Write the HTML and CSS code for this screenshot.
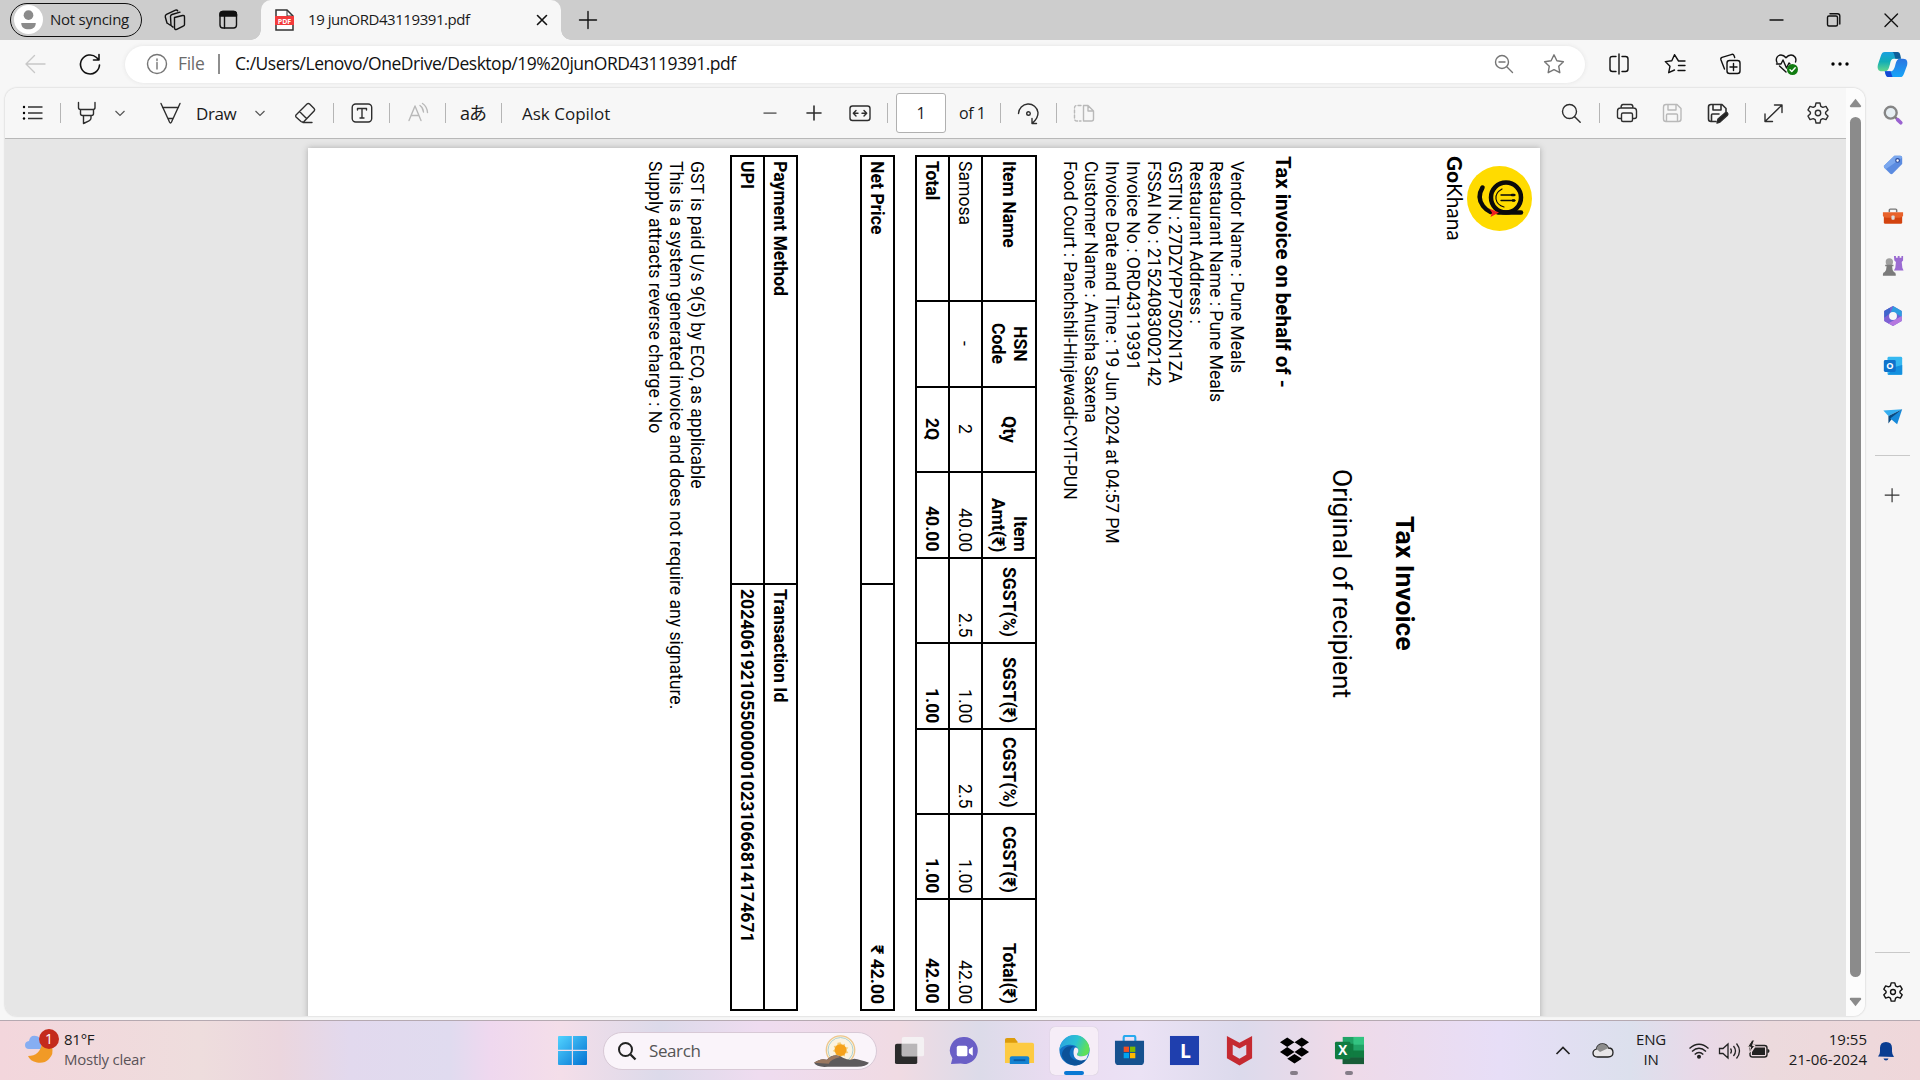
FILE: index.html
```html
<!DOCTYPE html>
<html lang="en">
<head>
<meta charset="utf-8">
<title>19 junORD43119391.pdf</title>
<link rel="stylesheet" href="styles.css">
</head>
<body>
<div class="browser">
  <header class="tabstrip">
    <div class="profile"><svg class="avatar" viewBox="0 0 30 30"><circle cx="15" cy="15" r="15" fill="#fff"/><circle cx="15" cy="10.500" r="5" fill="#8b8b8b"/><path d="M7.500 18.500h15c0 4.500-3 6.500-7.500 6.500s-7.500-2-7.500-6.500z" fill="#8b8b8b"/></svg><span>Not syncing</span></div>
    <svg class="ico dark" viewBox="0 0 24 24"><path d="M11.500 9.500l8-2q2-.4 2 1.500v7.500q0 1.300-1.300 1.600l-6.500 3.300q-2 .6-2.200-1.200zM8 17.500l-.5-9q0-1.500 1.500-2l8-2.300M4 15l-1.700-6q-.3-2 1.200-2.700l9-4.200q1.500-.5 2.200.8M8 17.500l2 1.600M4 15l3 2"/></svg>
    <svg class="ico dark" viewBox="0 0 24 24"><rect x="4" y="3.500" width="16.500" height="16.500" rx="3"/><path d="M8.500 8v12"/><path d="M4 8V6.500q0-3 3-3h10.500q3 0 3 3V8z" fill="#111"/></svg>
    <div class="tab">
      <svg class="ico" viewBox="0 0 24 24"><path d="M4 2h11l6 6v14H4z" fill="#fff" stroke="#333" stroke-width="1.500"/><path d="M15 2v6h6" stroke="#333" fill="none"/><rect x="3" y="8" width="19" height="9" fill="#f33b3b"/><text x="12.500" y="15.500" class="pdftext">PDF</text></svg>
      <span class="tabtitle">19 junORD43119391.pdf</span>
      <svg class="ico dark" viewBox="0 0 24 24"><path d="M7.500 7.500l9 9M16.500 7.500l-9 9" stroke-width="1.600"/></svg>
    </div>
    <svg class="ico dark" viewBox="0 0 24 24"><path d="M12 3.500v17M3.500 12h17"/></svg>
    <svg class="ico dark" viewBox="0 0 24 24"><path d="M6 12h13"/></svg>
    <svg class="ico dark" viewBox="0 0 24 24"><rect x="6.500" y="8" width="10" height="10" rx="1.500"/><path d="M9 5.800h7.500q2.300 0 2.300 2.300V16"/></svg>
    <svg class="ico dark" viewBox="0 0 24 24"><path d="M6 6l12.500 12.500M18.500 6L6 18.500"/></svg>
  </header>

  <div class="navbar">
    <svg class="ico pale" viewBox="0 0 24 24"><path d="M22 12H3M11.500 3.500L3 12l8.500 8.500"/></svg>
    <svg class="ico dark" viewBox="0 0 24 24"><path d="M21.500 13A9.500 9.500 0 1 1 18.500 5.500L21 8M21 2.500V8h-5.500" stroke-width="1.600"/></svg>
    <div class="address">
      <svg class="ico gray" viewBox="0 0 24 24"><circle cx="12" cy="12" r="9.500"/><path d="M12 10.500v6.500M12 7v1.600"/></svg>
      <span class="scheme">File</span>
      <i class="urlsep"></i>
      <span class="url">C:/Users/Lenovo/OneDrive/Desktop/19%20junORD43119391.pdf</span>
      <svg class="ico gray" viewBox="0 0 24 24"><circle cx="10" cy="10" r="6.500"/><path d="M15 15l5.500 5.500M7 10h6"/></svg>
      <svg class="ico gray" viewBox="0 0 24 24"><path d="M12 2.800l2.900 6 6.500.9-4.700 4.500 1.100 6.500-5.800-3.100-5.800 3.100 1.100-6.500L2.600 9.700l6.500-.9z"/></svg>
    </div>
    <svg class="ico dark" viewBox="0 0 24 24"><path d="M12 2v20M9 4.500H5.500q-2.500 0-2.500 2.500v10q0 2.500 2.500 2.500H9M15 4.500h3.500q2.500 0 2.500 2.500v10q0 2.500-2.500 2.500H15"/></svg>
    <svg class="ico dark" viewBox="0 0 24 24"><path d="M22 9h-6.500L11.500 2.700l-2.700 6-6.500.9L7 14.200l-1.300 6.500L11.500 18M15.500 13.500H22M15 18.500h7"/></svg>
    <svg class="ico dark" viewBox="0 0 24 24"><rect x="9" y="8.500" width="13" height="13" rx="2.500"/><path d="M15.500 11.500v7M12 15h7M6.500 17L3 8q-.7-2 1-2.700L14 2.300q1.500-.3 2.200 1.700l.5 1.500"/></svg>
    <svg class="ico dark" viewBox="0 0 24 24"><path d="M3 10.500C1 6 4 3 7 3c2.500 0 4 1.500 5 2.800C13 4.500 14.500 3 17 3c3 0 6 3 4.500 7M5.500 14l6.500 6M2.500 12H7l2-4 3.500 8 2.500-5 1 1"/><circle cx="18.500" cy="17.500" r="5.500" fill="#107c10" stroke="none"/><path d="M16 17.700l1.800 1.800 3.400-3.700" stroke="#fff"/></svg>
    <svg class="ico" viewBox="0 0 24 24"><circle cx="5" cy="12" r="1.700"/><circle cx="12" cy="12" r="1.700"/><circle cx="19" cy="12" r="1.700"/></svg>
    <svg class="copilot" viewBox="0 0 32 32">
      <defs><linearGradient id="cpa" x1="0" y1="0" x2="0" y2="1"><stop offset="0" stop-color="#1aa0e0"/><stop offset=".5" stop-color="#12adb6"/><stop offset="1" stop-color="#63d68c"/></linearGradient><linearGradient id="cpb" x1="0" y1="1" x2="0" y2="0"><stop offset="0" stop-color="#18a5f8"/><stop offset="1" stop-color="#2c75e0"/></linearGradient></defs>
      <path d="M8 3h12c3 0 3 3 4 7h-7c-3 0-3 4-4 7-1 4-2 6-5 6H5c-4 0-5-3-4-7L4 7c1-3 2-4 4-4z" fill="url(#cpa)"/>
      <path d="M16 3h5c3 0 3 3 4 7h-6c-1-3-1-6-3-7z" fill="#0d5e99"/>
      <path d="M24 29H12c-3 0-3-3-4-6h6c3 0 4-3 5-7 1-4 2-6 5-6h3c4 0 5 3 4 7l-3 8c-1 3-2 4-4 4z" fill="url(#cpb)"/>
      <path d="M8 23h6l2 6h-4c-3 0-3-3-4-6z" fill="#1548d4"/>
    </svg>
  </div>

  <div class="body">
    <main class="viewer">
      <div class="content">
        <div class="pdfbar">
          <svg class="ico" viewBox="0 0 24 24"><path d="M8 6h14.500M8 12h14.500M8 17.500h14.500" fill="none" stroke="#333" stroke-width="1.500"/><circle cx="4" cy="6" r="1.200"/><circle cx="4" cy="12" r="1.200"/><circle cx="4" cy="17.500" r="1.200"/></svg>
          <i class="sep"></i>
          <svg class="ico tool" viewBox="0 0 24 24"><path d="M4.500 1.500V6.500q0 2 2 2H19q2 0 2-2V1.500M6.500 8.500v4q0 2 2 2h9q2 0 2-2v-4M9.500 14.500v8l5.500-2.700q2-1 2-2.500v-2.800"/></svg>
          <svg class="chev" viewBox="0 0 16 16"><path d="M3.500 6L8 10.500 12.500 6"/></svg>
          <svg class="ico tool" viewBox="0 0 24 24"><path d="M3 2.500L11.500 21q1 2 2 0L22 2.500M4.500 6.500h16M10.500 17.500h4"/></svg>
          <span class="draw">Draw</span>
          <svg class="chev" viewBox="0 0 16 16"><path d="M3.500 6L8 10.500 12.500 6"/></svg>
          <svg class="ico tool" viewBox="0 0 24 24"><path d="M3 14L14 3q1.300-1.200 2.600 0l4.500 4.500q1.200 1.300 0 2.600L11 20.500q-1.500 1-3 0L3 16q-.8-1 0-2zM6.500 10.500l7 7M10 21.500h9"/></svg>
          <i class="sep"></i>
          <svg class="ico tool" viewBox="0 0 24 24"><rect x="2.200" y="3" width="19.500" height="18" rx="3.500"/><path d="M7.500 9V7.500h9V9M12 7.500v9.500M10 17h4"/></svg>
          <i class="sep"></i>
          <svg class="ico faint" viewBox="0 0 24 24"><path d="M3 19.500L9 5l6 14.500M5.200 14.500h7.600M14 4.500q3 2 3.500 6.500M16.500 2.500q4.500 3 5 9"/></svg>
          <i class="sep"></i>
          <span class="translate">aあ</span>
          <i class="sep"></i>
          <span class="ask">Ask Copilot</span>
          <svg class="ico" viewBox="0 0 24 24"><path d="M5.500 11.200h13v1.800h-13z" fill="#777"/></svg>
          <svg class="ico tool" viewBox="0 0 24 24"><path d="M12 5v14M5 12h14" stroke-width="1.600"/></svg>
          <svg class="ico tool" viewBox="0 0 24 24"><rect x="2" y="5" width="20" height="14.500" rx="2.500"/><path d="M10 12.200H5.500M8 9.500l-2.700 2.700L8 15M14 12.200h4.500M16 9.500l2.700 2.700L16 15"/></svg>
          <i class="sep"></i>
          <span class="pagebox">1</span>
          <span class="ofn">of 1</span>
          <i class="sep"></i>
          <svg class="ico tool" viewBox="0 0 24 24"><path d="M1.500 12.500A9.800 9.800 0 0 1 21 11.500q.3 5.500-5.500 10.500M15 17.500V22.500h4.500"/><circle cx="11.500" cy="12.500" r="1.800"/></svg>
          <i class="sep"></i>
          <svg class="ico faint" viewBox="0 0 24 24"><path d="M11.500 4.500v15.500h8q2 0 2-2v-8l-5.500-5.500zM16 4.500V10h5.500"/><path d="M9 4.500H5q-2.500 0-2.500 2.500v10.500Q2.500 20 5 20h4" stroke-dasharray="3 2"/></svg>
          <svg class="ico tool" viewBox="0 0 24 24"><circle cx="10.500" cy="10.500" r="7"/><path d="M15.700 15.700l5.500 5.500"/></svg>
          <i class="sep"></i>
          <svg class="ico tool" viewBox="0 0 24 24"><path d="M6 17.500H4.500q-2 0-2-2V10q0-3 3-3h13q3 0 3 3v5.500q0 2-2 2H18M6 7q0-3.500 2-3.500h8q2 0 2 3.500"/><rect x="6.500" y="12" width="11" height="8.500" rx="1.500"/></svg>
          <svg class="ico faint" viewBox="0 0 24 24"><path d="M6 3.500h11l4 4V18q0 2.500-2.500 2.500H6Q3.500 20.500 3.500 18V6Q3.500 3.500 6 3.500zM8 3.500V9h8V3.500M6.500 20.500V14q0-1 1-1h9q1 0 1 1v6.500"/></svg>
          <svg class="ico tool" viewBox="0 0 24 24"><path d="M11 20.500H6Q3.500 20.500 3.500 18V6Q3.500 3.500 6 3.500h11l4 4V11M8 3.500V9h8V3.500M6.500 20.500V14q0-1 1-1H14" stroke-width="1.600"/><path d="M12 22l1-4 7-6q2-1 2.500 0 .8 1.300-.3 2.500L15 21z" fill="#222"/></svg>
          <i class="sep"></i>
          <svg class="ico tool" viewBox="0 0 24 24"><path d="M4 20.500L21 4M13.500 4H21v7.500M4 13v7.500h7.500"/></svg>
          <svg class="ico tool" viewBox="0 0 24 24"><use href="#gear"/></svg>
        </div>

        <div class="canvas">
          <article class="sheet">
            <div class="brand">
              <svg class="logo" viewBox="0 0 65 65">
                <circle cx="32.500" cy="32.500" r="32.500" fill="#ffdb00"/>
                <g fill="none" stroke="#0a0a0a" stroke-linecap="round">
                  <circle cx="39" cy="31.500" r="15" stroke-width="4.500"/>
                  <path d="M31 46.500h23" stroke-width="4.500"/>
                  <path d="M15.500 21.500q-6 10 .5 18.500 3 4 7.500 6" stroke-width="4.500"/>
                  <path d="M35 23q-7 4-6 10 1 6 8 8" stroke-width="1.200"/>
                  <path d="M34 29h14M34 34.500h14" stroke-width="1.300"/>
                  <path d="M45 29h2M46 34.500h1" stroke-width="2.600"/>
                </g>
                <path d="M22 42.500l10 4-8.500 4.500 1.500-4.500z" fill="#ee2020"/>
              </svg>
              <div class="wordmark"><b>Go</b>Khana</div>
            </div>
            <h1>Tax Invoice</h1>
            <p class="copy">Original of recipient</p>
            <h2>Tax invoice on behalf of -</h2>
            <div class="lines details">
              <p>Vendor Name : Pune Meals</p>
              <p>Restaurant Name : Pune Meals</p>
              <p>Restaurant Address :</p>
              <p>GSTIN : 27DZYPP7502N1ZA</p>
              <p>FSSAI No : 21524083002142</p>
              <p>Invoice No : ORD43119391</p>
              <p>Invoice Date and Time : 19 Jun 2024 at 04:57 PM</p>
              <p>Customer Name : Anusha Saxena</p>
              <p>Food Court : Panchshil-Hinjewadi-CYIT-PUN</p>
            </div>
            <div class="table items">
              <b>Item Name</b><b class="mid">HSN<br>Code</b><b class="mid">Qty</b><b class="end">Item<br>Amt(₹)</b><b class="end">SGST(%)</b><b class="end">SGST(₹)</b><b class="end">CGST(%)</b><b class="end">CGST(₹)</b><b class="end">Total(₹)</b>
              <span>Samosa</span><span class="mid">-</span><span class="mid">2</span><span class="end">40.00</span><span class="end">2.5</span><span class="end">1.00</span><span class="end">2.5</span><span class="end">1.00</span><span class="end">42.00</span>
              <b>Total</b><b></b><b class="mid">2Q</b><b class="end">40.00</b><b></b><b class="end">1.00</b><b></b><b class="end">1.00</b><b class="end">42.00</b>
            </div>
            <div class="table net"><b>Net Price</b><b class="end">₹ 42.00</b></div>
            <div class="table pay"><b>Payment Method</b><b>Transaction Id</b><b>UPI</b><b>20240619210550000010231066814174671</b></div>
            <div class="lines notes">
              <p>GST is paid U/s 9(5) by ECO, as applicable</p>
              <p>This is a system generated invoice and does not require any signature.</p>
              <p>Supply attracts reverse charge : No</p>
            </div>
          </article>
        </div>
      </div>
      <div class="scrollbar">
        <svg viewBox="0 0 14 10"><path d="M7 .5L13 8q.5 1.500-1 1.500H2Q.5 9.500 1 8z"/></svg>
        <div class="thumb"></div>
        <svg viewBox="0 0 14 10"><path d="M7 9.500L13 2q.5-1.500-1-1.500H2Q.5.500 1 2z"/></svg>
      </div>
    </main>

    <aside class="sidebar">
      <svg viewBox="0 0 24 24"><circle cx="9.500" cy="9.500" r="6.500" fill="#e6eef2" stroke="#858585" stroke-width="2.600"/><path d="M14.500 14.500l3 3" stroke="#777" stroke-width="2.500"/><path d="M17 17l3.500 3.500" stroke="#9a62d0" stroke-width="4" stroke-linecap="round"/></svg>
      <svg viewBox="0 0 24 24"><path d="M13.500 2H20q2 0 2 2v7L11.500 21.500q-1.300 1-2.500 0L2.500 15q-1-1.300 0-2.500z" fill="#5b8be0"/><path d="M13.500 2H20q2 0 2 2L4 16.500 2.500 15q-1-1.300 0-2.500z" fill="#7aa7ee"/><circle cx="17" cy="7" r="2" fill="#fff" stroke="#27489b" stroke-width="1.300"/></svg>
      <svg viewBox="0 0 24 24"><path d="M8 8V5.500Q8 4.500 9 4.500h6q1 0 1 1V8" fill="none" stroke="#777" stroke-width="1.600"/><rect x="2" y="9" width="20" height="11.500" rx="1.500" fill="#d3430f"/><path d="M1 8h22v4q-2 2-4 2H5q-3 0-4-2z" fill="#e8622b"/><rect x="10.300" y="11.500" width="3.500" height="4.500" rx="1" fill="#ddd"/></svg>
      <svg viewBox="0 0 24 24"><path d="M13 1h2.200v2h2V1h2v2h2V1H23v5l-1.500 1.500.7 6.500 1.300 3H13l1.500-3 .7-6.500L13.500 6z" fill="#9b6bd2"/><circle cx="8" cy="7.500" r="4" fill="#a0a0a0"/><path d="M3.500 10.500h9v1.700H11q0 4 2 6.300 2 .5 2 2.500v1.500H1V21q0-2 2-2.500 2-2.300 2-6.300H3.500z" fill="#7b7b7b"/></svg>
      <svg viewBox="0 0 24 24"><path d="M12 1l9.500 5.500v11L12 23l-9.500-5.500v-11z" fill="#6d63d3"/><path d="M12 1l9.500 5.500V13L14 8.500 9 10z" fill="#2e9de0"/><path d="M12 1L2.500 6.500v11l6 3.500V9z" fill="#8062d4"/><path d="M12 1L9 3v6l-6.500 5V6.500z" fill="#3f66cc"/><path d="M21.500 12v5.500L12 23l-5-3 9-5z" fill="#b577df"/><circle cx="12" cy="12" r="4.300" fill="#f7f7f7"/></svg>
      <svg viewBox="0 0 24 24"><rect x="6" y="2" width="16" height="19.500" rx="1.500" fill="#35b8f1"/><path d="M6 7h8v6H6z" fill="#0364b8"/><path d="M14 13l8-2v10.500H6z" fill="#1490df"/><rect x="2" y="5.500" width="13" height="13" rx="1.500" fill="#0f73cc"/><text x="8.500" y="15.800" class="tileletter">O</text></svg>
      <svg viewBox="0 0 24 24"><path d="M1.500 5L22 3.500 7 11z" fill="#35aef0"/><path d="M22 3.500L7 11v8l3-4z" fill="#0b4a80"/><path d="M22 3.500L16.500 20 9 13.500z" fill="#1689da"/></svg>
      <hr>
      <svg viewBox="0 0 24 24"><path d="M11 4.500v15.500M3 12.200h16" stroke="#333" stroke-width="1.300"/></svg>
      <div class="grow"></div>
      <hr>
      <svg class="settings" viewBox="0 0 24 24" fill="none" stroke="#111" stroke-width="1.500" stroke-linejoin="round"><g id="gear"><path d="M10 2h4l.8 3.300 2 1.100 3.200-1 2 3.500-2.400 2.300v1.600l2.400 2.300-2 3.500-3.200-1-2 1.100L14 22h-4l-.8-3.300-2-1.100-3.200 1-2-3.500 2.400-2.300v-1.600L2 8.900l2-3.500 3.200 1 2-1.100z"/><circle cx="12" cy="12" r="2.700"/></g></svg>
    </aside>
  </div>
</div>

<footer class="taskbar">
  <svg class="weather" viewBox="0 0 34 36"><path d="M4 20q-4 0-4-4 0-3.500 4-4 1-6 7-5 4 .5 5 5v8z" fill="#86aef2"/><path d="M3 27q12 0 14-13l10 4q2 7-3 12-5 5-12 3.500Q5 32 3 27z" fill="#f19a26"/><circle cx="24" cy="10" r="10" fill="#c42b1c"/><text x="24" y="15" class="badgenum">1</text></svg>
  <div class="forecast"><span>81°F</span><span class="sub">Mostly clear</span></div>
  <svg class="start" viewBox="0 0 30 30"><defs><linearGradient id="win" x1="0" y1="0" x2="1" y2="1"><stop offset="0" stop-color="#52d3ff"/><stop offset="1" stop-color="#0372d2"/></linearGradient></defs><path d="M1 0h13.300v14.300H0V1q0-1 1-1zM15.500 0H29q1 0 1 1v13.300H15.500zM0 15.500h14.300V30H1q-1 0-1-1zM15.500 15.500H30V29q0 1-1 1H15.500z" fill="url(#win)"/></svg>
  <div class="search">
    <svg viewBox="0 0 20 20"><circle cx="8.500" cy="8.500" r="6.500" fill="none" stroke="#222" stroke-width="2"/><path d="M13.500 13.500l5 5" stroke="#222" stroke-width="2.300"/></svg>
    <span>Search</span>
    <svg class="sun" viewBox="0 0 56 34"><circle cx="27" cy="16" r="14.500" fill="#fbf3e2" stroke="#ecc78d" stroke-width="1.300"/><circle cx="27" cy="16" r="12.700" fill="none" stroke="#a9cfd4"/><path d="M27 8l1.500 3 3-1.500v3.500l3.500.5-2 2.500 2 3-3.500.5v3l-3-1-1.500 2.500-2-3-3 .5v-3l-3-1.500 2.500-2-1.500-3 3.500-.5.500-3z" fill="#f6cd77"/><circle cx="27" cy="16" r="6" fill="#f6a21c"/><path d="M0 29q7-5 13-3 8-8 17-2 6 3 11 1 6 1 15 4-3 4-12 4H14Q3 34 0 29z" fill="#5d5a5c"/><path d="M0 29q7-5 13-3 7-7 14-3-10 2-12 7z" fill="#9a7760"/></svg>
  </div>
  <nav class="apps">
    <span><svg viewBox="0 0 32 32"><rect x="1" y="9" width="23" height="21" rx="2" fill="#2b2b2b"/><rect x="8" y="2" width="23" height="20" rx="2" fill="#f4f2f3" opacity=".95"/><path d="M8 9h16v13H8z" fill="#b9b6b8"/></svg></span>
    <span><svg viewBox="0 0 32 32"><path d="M16 2a14 14 0 1 1-4 27.500L2 30l1.500-6A14 14 0 0 1 16 2z" fill="#6a5fc6"/><rect x="8" y="11" width="11" height="11" rx="2" fill="#fff"/><path d="M20.500 15l4-3v9.500l-4-3z" fill="#fff"/></svg></span>
    <span><svg viewBox="0 0 32 32"><path d="M1 5q0-2 2-2h8l3 4v5H1z" fill="#dc9c0c"/><path d="M1 8h28q2 0 2 2v19H1z" fill="#fdca42"/><path d="M6 30v-6q0-2 2-2h16q2 0 2 2v6z" fill="#1583d2"/><path d="M10 26h12" stroke="#0b5ba3" stroke-width="2"/></svg></span>
    <span class="active"><svg viewBox="0 0 32 32"><defs><linearGradient id="edg" x1="0" y1="0" x2="1" y2=".3"><stop offset="0" stop-color="#2b9de4"/><stop offset=".6" stop-color="#2bc3d2"/><stop offset="1" stop-color="#5fe05a"/></linearGradient></defs><circle cx="16" cy="16" r="15.500" fill="#1271c4"/><path d="M.5 16A15.500 15.500 0 0 1 31.500 15c0 5-4 7-8 7-3 0-5-1-5-2 0-1 1.500-1.500 1.500-4 0-3-3-6-8-6C7 10 2 12 .5 16z" fill="url(#edg)"/><path d="M11 19c0-5 3-7 5-7-5-2-13 1-13 9 1 5 6 10 13 10.500 6 0 10-3 12-6.500 0-1-4 2-8 1-5 0-9-3-9-7z" fill="#0c5299"/><path d="M20 16c0 2.500-1.500 3-1.500 4s2 2 5 2c3.500 0 6-1.500 7.500-4l-3 7c-4 2-9 1.500-11.500-1.500S15 13 17 13s3 1.500 3 3z" fill="#f4eef6"/></svg></span>
    <span><svg viewBox="0 0 32 32"><path d="M10 7V2.500q0-1.500 1.500-1.500h9Q22 1 22 2.500V7" fill="none" stroke="#27a9ee" stroke-width="2.200"/><path d="M1 6h30v21q0 4-4 4H5q-4 0-4-4z" fill="#16518f"/><path d="M10 12h5.500v5.500H10z" fill="#f25022"/><path d="M16.500 12H22v5.500h-5.500z" fill="#7fba00"/><path d="M10 18.500h5.500V24H10z" fill="#00a4ef"/><path d="M16.500 18.500H22V24h-5.500z" fill="#ffb900"/></svg></span>
    <span><svg viewBox="0 0 32 32"><rect x="1" y="1" width="30" height="30" fill="#1f3fae"/><text x="17" y="24" class="lletter">L</text></svg></span>
    <span><svg viewBox="0 0 32 32"><path d="M3 1l13 7 13-7v23l-13 7.500L3 24zM9 10v10.500l7 4 7-4V10l-7 4z" fill="#c52a31" fill-rule="evenodd"/></svg></span>
    <span class="running"><svg viewBox="0 0 32 32"><path d="M8.500 2.500l7.500 5-7.500 5-7.500-5zM23.500 2.500l7.500 5-7.500 5-7.500-5zM8.500 12.500l7.500 5-7.500 5-7.500-5zM23.500 12.500l7.500 5-7.500 5-7.500-5zM16 19.500l7.500 5-7.500 5-7.500-5z"/></svg></span>
    <span class="running"><svg viewBox="0 0 32 32"><path d="M9 2h22v28H9z" fill="#21a366"/><path d="M20 2h11v8H20z" fill="#33c481"/><path d="M9 9h11v14H9zM20 16h11v7H20z" fill="#107c41"/><path d="M9 23h22v7H9z" fill="#185c37"/><rect x="1" y="7" width="16" height="18" rx="1.500" fill="#107c41"/><text x="9" y="21" class="xletter">X</text></svg></span>
  </nav>
  <div class="tray">
    <svg viewBox="0 0 24 24"><path d="M5.500 15L12 8.500l6.500 6.500" fill="none" stroke="#222" stroke-width="1.700"/></svg>
    <svg viewBox="0 0 24 24"><path d="M6.500 18Q2 18 2 14q0-3 3.500-4 1-5 6-5 4 0 6 4 4.500 0 4.500 4.500 0 4.500-5 4.500z" fill="#e8e6e8" stroke="#222" stroke-width="1.300"/><path d="M5.500 10q1-5 6-5 4 0 6 4L9 13z" fill="#8c8c8c"/></svg>
    <div class="lang"><span>ENG</span><span>IN</span></div>
    <svg viewBox="0 0 24 24" fill="none" stroke="#222" stroke-width="1.400"><path d="M2.500 9.500q9.500-8.500 19 0M5 12.500q7-6.500 14 0M7.700 15.500q4.300-4.200 8.600 0"/><circle cx="12" cy="17.700" r="1.300" fill="#222"/></svg>
    <svg viewBox="0 0 24 24" fill="none" stroke="#222" stroke-width="1.300"><path d="M2.500 9.500v5h3.500l5 4.500V5L6 9.500zM13.500 9.500q1.800 2.500 0 5M16.500 7q4 5 0 10M19.500 4.500q6 7.500 0 15"/></svg>
    <svg viewBox="0 0 24 24"><rect x="3" y="6.500" width="17" height="11.500" rx="2.500" fill="none" stroke="#222" stroke-width="1.400"/><path d="M8 8.500h10v7.500H5v-3z" fill="#222"/><path d="M20.500 10q2 0 2 2t-2 2z" fill="#222"/><path d="M5 1L.5 8h3L2.500 13.500l5.500-7H5.500L7.500 1z" fill="#222" stroke="#ecdadd" stroke-width="1"/></svg>
    <div class="clock"><span>19:55</span><span>21-06-2024</span></div>
    <svg viewBox="0 0 24 24"><path d="M4 17.500q2-2 2-5V9q0-6 6-6t6 6v3.500q0 3 2 5.500zM9.500 19.500h5q-.5 2-2.500 2t-2.500-2z" fill="#0a3d91"/></svg>
  </div>
</footer>
</body>
</html>
```
FILE: styles.css
```css
* { box-sizing: border-box; }
body { margin: 0; width: 1920px; height: 1080px; overflow: hidden; font-family: "Open Sans", "Noto Sans", "Noto Sans CJK JP", sans-serif; color: #1a1a1a; background: #f7f7f7; }
svg { display: block; flex: none; }
p, h1, h2 { margin: 0; }
hr { width: 35px; height: 1px; margin: 0; border: 0; background: #c9c9c9; }
.browser { height: 1020px; display: flex; flex-direction: column; }
.ico { width: 24px; height: 24px; }
.dark, .gray, .pale, .tool, .faint { fill: none; stroke-width: 1.4; stroke-linejoin: round; stroke-linecap: round; }
.dark { stroke: #111; }
.tool { stroke: #2e2e2e; }
.gray { stroke: #757575; }
.pale { stroke: #c8c8c8; }
.faint { stroke: #b9b9b9; }

/* Tab strip */
.tabstrip { height: 40px; padding-left: 10px; background: #cdcdcd; display: grid; grid-template-columns: 153px 53px 45px 315px 1188px 57px 58px 41px; align-items: center; }
.profile { width: 132px; height: 34px; margin-top: -1px; padding-left: 3px; border: 1.5px solid #111; border-radius: 17px; display: flex; align-items: center; gap: 7px; font-size: 15px; letter-spacing: -.25px; white-space: nowrap; }
.profile span, .tabtitle { padding-bottom: 2px; }
.avatar { width: 29px; height: 29px; }
.tab { position: relative; width: 300px; height: 40px; padding-left: 11px; background: #f7f7f7; border-radius: 10px 10px 0 0; display: grid; grid-template-columns: 36px 222px 24px; align-items: center; }
.tab::before, .tab::after { content: ""; position: absolute; bottom: 0; width: 10px; height: 10px; }
.tab::before { left: -10px; background: radial-gradient(circle at 0 0, transparent 9.500px, #f7f7f7 10px); }
.tab::after { right: -10px; background: radial-gradient(circle at 100% 0, transparent 9.500px, #f7f7f7 10px); }
.tabtitle { font-size: 15px; letter-spacing: -.45px; white-space: nowrap; }
.pdftext { font: bold 7px "Open Sans", sans-serif; fill: #fff; text-anchor: middle; }

/* Navigation row */
.navbar { height: 48px; padding-left: 23px; display: grid; grid-template-columns: 55px 47px 1482px 56px 55px 56px 54px 49px 31px; align-items: center; }
.address { width: 1460px; height: 37px; padding-left: 20px; background: #fff; border-radius: 19px; box-shadow: 0 0 4px #e3e3e3; display: grid; grid-template-columns: 33px 40px 17px 1257px 50px 24px; align-items: center; font-size: 17.500px; white-space: nowrap; }
.address span { padding-bottom: 2px; }
.scheme { color: #6b6b6b; letter-spacing: -.3px; }
.url { letter-spacing: -.48px; color: #111; }
.urlsep { width: 1.500px; height: 20px; background: #8e8e8e; }
.copilot { width: 31px; height: 31px; }

/* Document viewer */
.body { flex: 1; display: flex; min-height: 0; }
.viewer { width: 1860px; height: 928px; margin-left: 5px; border-radius: 12px; overflow: hidden; display: flex; box-shadow: 0 0 2px #bbb; }
.content { width: 1841px; display: flex; flex-direction: column; }
.pdfbar { height: 51px; padding-left: 15px; background: #f7f7f7; border-bottom: 1px solid #b8b8b8; display: grid; grid-template-columns: 40px 14px 38px 46px 38px 56px 41px 40px 17px 39px 17px 39px 15px 41px 21px 236px 44px 46px 39px 9px 63px 41px 17px 39px 16px 487px 40px 16px 45px 45px 40px 16px 45px 40px; align-items: center; font-size: 17px; white-space: nowrap; }
.sep { width: 1px; height: 20px; background: #b5b5b5; }
.chev { width: 16px; height: 16px; fill: none; stroke: #555; stroke-width: 1.200; }
.draw { letter-spacing: -.4px; }
.ask { letter-spacing: 0; }
.translate { font-size: 18px; letter-spacing: -1px; font-family: "Open Sans", "Noto Sans CJK JP", sans-serif; line-height: 20px; }
.pagebox { width: 50px; height: 40px; border: 1px solid #b0b0b0; border-radius: 3px; background: #fff; display: flex; align-items: center; justify-content: center; font-size: 16px; }
.ofn { font-size: 16px; letter-spacing: -.5px; }
.canvas { flex: 1; background: #e6e6e6; padding: 9px 0 0 303px; overflow: hidden; }
.scrollbar { width: 19px; background: #fcfcfc; display: flex; flex-direction: column; align-items: center; padding-top: 10px; }
.scrollbar svg { width: 13px; height: 10px; fill: #8b8b8b; }
.thumb { width: 11px; height: 860px; margin: 9px 0 20px; border-radius: 6px; background: #8b8b8b; }

/* Invoice sheet: the page is turned a quarter clockwise */
.sheet { width: 1232px; height: 900px; padding: 7px 8px 0 0; background: #fff; box-shadow: 0 0 6px #aaa; writing-mode: vertical-rl; text-orientation: sideways; font-family: Roboto, sans-serif; font-size: 17.620px; color: #000; white-space: nowrap; }
.brand { width: 111.400px; }
.logo { width: 65px; height: 65px; margin-top: 11px; }
.wordmark { margin: 1px 0 0 0; line-height: 24px; font-family: Lato, sans-serif; font-weight: 400; font-size: 20.800px; }
.wordmark b { font-weight: 900; }
h1 { line-height: 32px; font-size: 26.500px; font-weight: 700; margin-top: 361px; }
.copy { line-height: 32px; margin-right: 30.600px; margin-top: 314px; font-size: 26.450px; }
h2 { line-height: 24px; margin-right: 31px; margin-top: 1px; font-size: 20.500px; font-weight: 700; }
.lines { line-height: 20.900px; margin-top: 6px; }
.details { margin-right: 23.700px; }
.notes { margin-right: 22.800px; }
.table { height: 856px; background: #000; padding: 2px; gap: 2px; display: grid; }
.table > * { background: #fff; padding: 4px 1.500px 5px 0; line-height: 21.500px; display: flex; flex-direction: row; align-items: center; }
.table .mid { justify-content: center; text-align: center; }
.table .end { justify-content: flex-end; text-align: end; }
.items { width: 122px; margin-right: 22.200px; grid-template-columns: 143px 84px 83px 84px 83px 84px 83px 83px 109px; grid-template-rows: 52px 31px 31px; }
.net { width: 35px; margin-right: 20px; grid-template-columns: 426px 424px; grid-template-rows: 31px; }
.pay { width: 68px; margin-right: 62px; grid-template-columns: 426px 424px; grid-template-rows: 31px 31px; }

/* Edge sidebar */
.sidebar { width: 55px; padding-top: 16px; display: flex; flex-direction: column; align-items: center; gap: 27.300px; }
.sidebar svg { width: 22px; height: 22px; }
.sidebar svg:nth-child(n+2) { margin-top: 1px; }
.sidebar .grow { flex: 1; margin: -27px 0; }
.sidebar hr { flex: none; }
.sidebar .settings { margin: -11px 0 17px; }
.tileletter { font: bold 10px "Open Sans", sans-serif; fill: #fff; text-anchor: middle; }

/* Taskbar */
.taskbar { height: 60px; border-top: 1px solid #b5a9b1; display: flex; align-items: center; font-size: 15px; background: linear-gradient(90deg, #f3d6dc 0, #eedddd 200px, #ebd6de 280px, #e2d9ee 350px, #e0dbef 450px, #efd8ef 490px, #f4dee9 560px, #dcdaea 660px, #efdcf0 760px, #f0dbe3 900px, #dcdbe9 980px, #ebdcf2 1060px, #ebe2f5 1140px, #dcdaec 1240px, #efdae8 1340px, #e7def7 1500px, #dce0ed 1630px, #e9d9e8 1700px, #ecdadd 1770px, #efd7da 1920px); }
.weather { width: 34px; height: 36px; margin: -8px 5px 0 25px; }
.forecast, .lang, .clock { display: flex; flex-direction: column; line-height: 20px; padding-bottom: 3px; letter-spacing: -.25px; white-space: nowrap; }
.forecast { width: 494px; }
.sub { color: #5a5358; }
.start { width: 29px; height: 29px; }
.search { width: 274px; height: 38px; margin-left: 16px; padding: 0 7px 0 13px; border: 1px solid #d8c9d6; border-radius: 19px; background: #faf4fa; display: flex; align-items: center; font-size: 17px; color: #555; letter-spacing: -.4px; }
.search svg { width: 20px; height: 20px; }
.search span { margin: 0 auto 1px 12px; }
.search .sun { width: 55px; height: 34px; }
.apps { display: flex; gap: 7px; margin-left: 8px; }
.apps span { position: relative; width: 48px; height: 48px; border-radius: 5px; display: flex; align-items: center; justify-content: center; }
.apps svg { width: 31px; height: 31px; }
.apps .active { background: #f6edf7; box-shadow: 0 0 1px #bbb; }
.apps .active::after, .apps .running::after { content: ""; position: absolute; bottom: 0; width: 20px; height: 4px; border-radius: 2px; background: #0a78d4; }
.apps .running::after { width: 8px; background: #857d88; }
.lletter { font: bold 20px "Open Sans", sans-serif; fill: #fff; text-anchor: middle; }
.xletter { font: bold 14px "Open Sans", sans-serif; fill: #fff; text-anchor: middle; }
.badgenum { font: 14px "Open Sans", sans-serif; fill: #fff; text-anchor: middle; }
.tray { flex: 1; margin-left: 178px; display: grid; grid-template-columns: 40px 24px 72px 30px 30px 24px 96px 31px; align-items: center; }
.tray svg { width: 24px; height: 24px; }
.lang { text-align: center; }
.clock { text-align: right; letter-spacing: 0; }
.tray svg:last-child { margin-left: 7px; }
```
